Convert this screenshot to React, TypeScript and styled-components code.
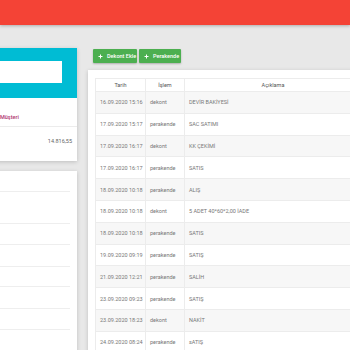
import React from "react";
import styled, { createGlobalStyle } from "styled-components";

const GlobalStyle = createGlobalStyle`
  html, body {
    margin: 0;
    padding: 0;
    background: #e8e8e8;
    overflow: hidden;
    font-family: Roboto, "Noto Sans", Arial, sans-serif;
  }
`

const TopBar = styled.div`
  height: 25px;
  background: #f44336;
  box-shadow: 0 1px 3px rgba(0, 0, 0, 0.25);
  position: relative;
  z-index: 2;
`

const Page = styled.div`
  display: flex;
  align-items: flex-start;
  gap: 11px;
  padding-top: 23px;
  margin-left: -73px;
  width: 520px;
  height: 330px;
`

const LeftColumn = styled.div`
  width: 150px;
  flex-shrink: 0;
  display: flex;
  flex-direction: column;
  gap: 10px;
`

const Card = styled.div`
  background: #fff;
  box-shadow: 0 1px 4px rgba(0, 0, 0, 0.18);
`

const CardHeader = styled.div`
  height: 50px;
  background: #00bcd4;
  box-sizing: border-box;
  padding: 13px 15px 0 0;
`

const SearchInput = styled.div`
  height: 22px;
  background: #fff;
`

interface IInfoRow {
  height: number;
  pad: number;
}
const InfoRow = styled.div<IInfoRow>`
  height: ${(p) => p.height}px;
  box-sizing: border-box;
  padding: ${(p) => p.pad}px 5px 0 73px;
  border-bottom: 1px solid #ececec;
  font-size: 5.5px;
  line-height: 8px;
  display: flex;
  justify-content: space-between;
  &:last-child {
    border-bottom: none;
  }
`

const CustomerType = styled.span`
  color: #b0336f;
  font-weight: 500;
`

const Balance = styled.span`
  color: #666;
`

const ListCard = styled(Card)`
  height: 200px;
`

interface IListRow {
  height: number;
}
const ListRow = styled.div<IListRow>`
  height: ${(p) => p.height}px;
  box-sizing: border-box;
  margin-right: 7px;
  border-bottom: 1px solid #eeeeee;
`

const RightColumn = styled.div`
  width: 300px;
  flex-shrink: 0;
  display: flex;
  flex-direction: column;
  gap: 7px;
`

const ButtonBar = styled.div`
  display: flex;
  gap: 2px;
  padding-left: 5px;
  padding-top: 1px;
`

interface IActionButton {
  width: number;
}
const ActionButton = styled.div<IActionButton>`
  width: ${(p) => p.width}px;
  height: 14px;
  box-sizing: border-box;
  padding-left: 5px;
  background: #4caf50;
  color: #fff;
  font-size: 5.5px;
  font-weight: 500;
  display: flex;
  align-items: center;
  gap: 4px;
  border-radius: 1px;
  box-shadow: 0 1px 2px rgba(0, 0, 0, 0.25);
`

const TableCard = styled(Card)`
  padding: 8px 7px;
  height: 300px;
`

const Table = styled.table`
  border-collapse: collapse;
  table-layout: fixed;
  width: 263px;
  font-size: 5.5px;
  color: #777;
`

interface ICell {
  width?: number;
}
const HeadCell = styled.th<ICell>`
  width: ${(p) => (p.width ? `${p.width}px` : "auto")};
  height: 12px;
  padding: 0;
  border: 1px solid #ececec;
  font-weight: 400;
  color: #555;
  text-align: center;
`

const Row = styled.tr`
  height: 21.8px;
  &:nth-child(odd) {
    background: #f7f7f7;
  }
`

const Cell = styled.td`
  padding: 0 4px;
  border: 1px solid #ececec;
  white-space: nowrap;
  overflow: hidden;
`

const PlusIcon = () => (
  <svg width="5" height="5" viewBox="0 0 10 10">
    <path d="M5 1v8M1 5h8" stroke="#fff" strokeWidth="2" />
  </svg>
)

const rows = [
  ["16.09.2020 15:16", "dekont", "DEVİR BAKİYESİ"],
  ["17.09.2020 15:17", "perakende", "SAC SATIMI"],
  ["17.09.2020 16:17", "dekont", "KK ÇEKİMİ"],
  ["17.09.2020 16:17", "perakende", "SATIS"],
  ["18.09.2020 10:18", "perakende", "ALIŞ"],
  ["18.09.2020 10:18", "dekont", "5 ADET 40*60*2,00 İADE"],
  ["18.09.2020 10:18", "perakende", "SATIS"],
  ["19.09.2020 09:19", "perakende", "SATIŞ"],
  ["21.09.2020 12:21", "perakende", "SALİH"],
  ["23.09.2020 09:23", "perakende", "SATIŞ"],
  ["23.09.2020 18:23", "dekont", "NAKİT"],
  ["24.09.2020 08:24", "perakende", "sATIŞ"],
]

const listHeights = [21, 32, 21, 22, 20, 22, 21]

export default function App() {
  return (
    <>
      <GlobalStyle />
      <TopBar />
      <Page>
        <LeftColumn>
          <Card>
            <CardHeader>
              <SearchInput />
            </CardHeader>
            <InfoRow height={29} pad={15}>
              <CustomerType>Müşteri</CustomerType>
            </InfoRow>
            <InfoRow height={34} pad={10}>
              <span />
              <Balance>14.816,55</Balance>
            </InfoRow>
          </Card>
          <ListCard>
            {listHeights.map((h, i) => (
              <ListRow key={i} height={h} />
            ))}
          </ListCard>
        </LeftColumn>
        <RightColumn>
          <ButtonBar>
            <ActionButton width={44}>
              <PlusIcon />
              Dekont Ekle
            </ActionButton>
            <ActionButton width={42}>
              <PlusIcon />
              Perakende
            </ActionButton>
          </ButtonBar>
          <TableCard>
            <Table>
              <thead>
                <tr>
                  <HeadCell width={49}>Tarih</HeadCell>
                  <HeadCell width={38}>İşlem</HeadCell>
                  <HeadCell width={176}>Açıklama</HeadCell>
                </tr>
              </thead>
              <tbody>
                {rows.map((r, i) => (
                  <Row key={i}>
                    <Cell>{r[0]}</Cell>
                    <Cell>{r[1]}</Cell>
                    <Cell>{r[2]}</Cell>
                  </Row>
                ))}
              </tbody>
            </Table>
          </TableCard>
        </RightColumn>
      </Page>
    </>
  );
}
